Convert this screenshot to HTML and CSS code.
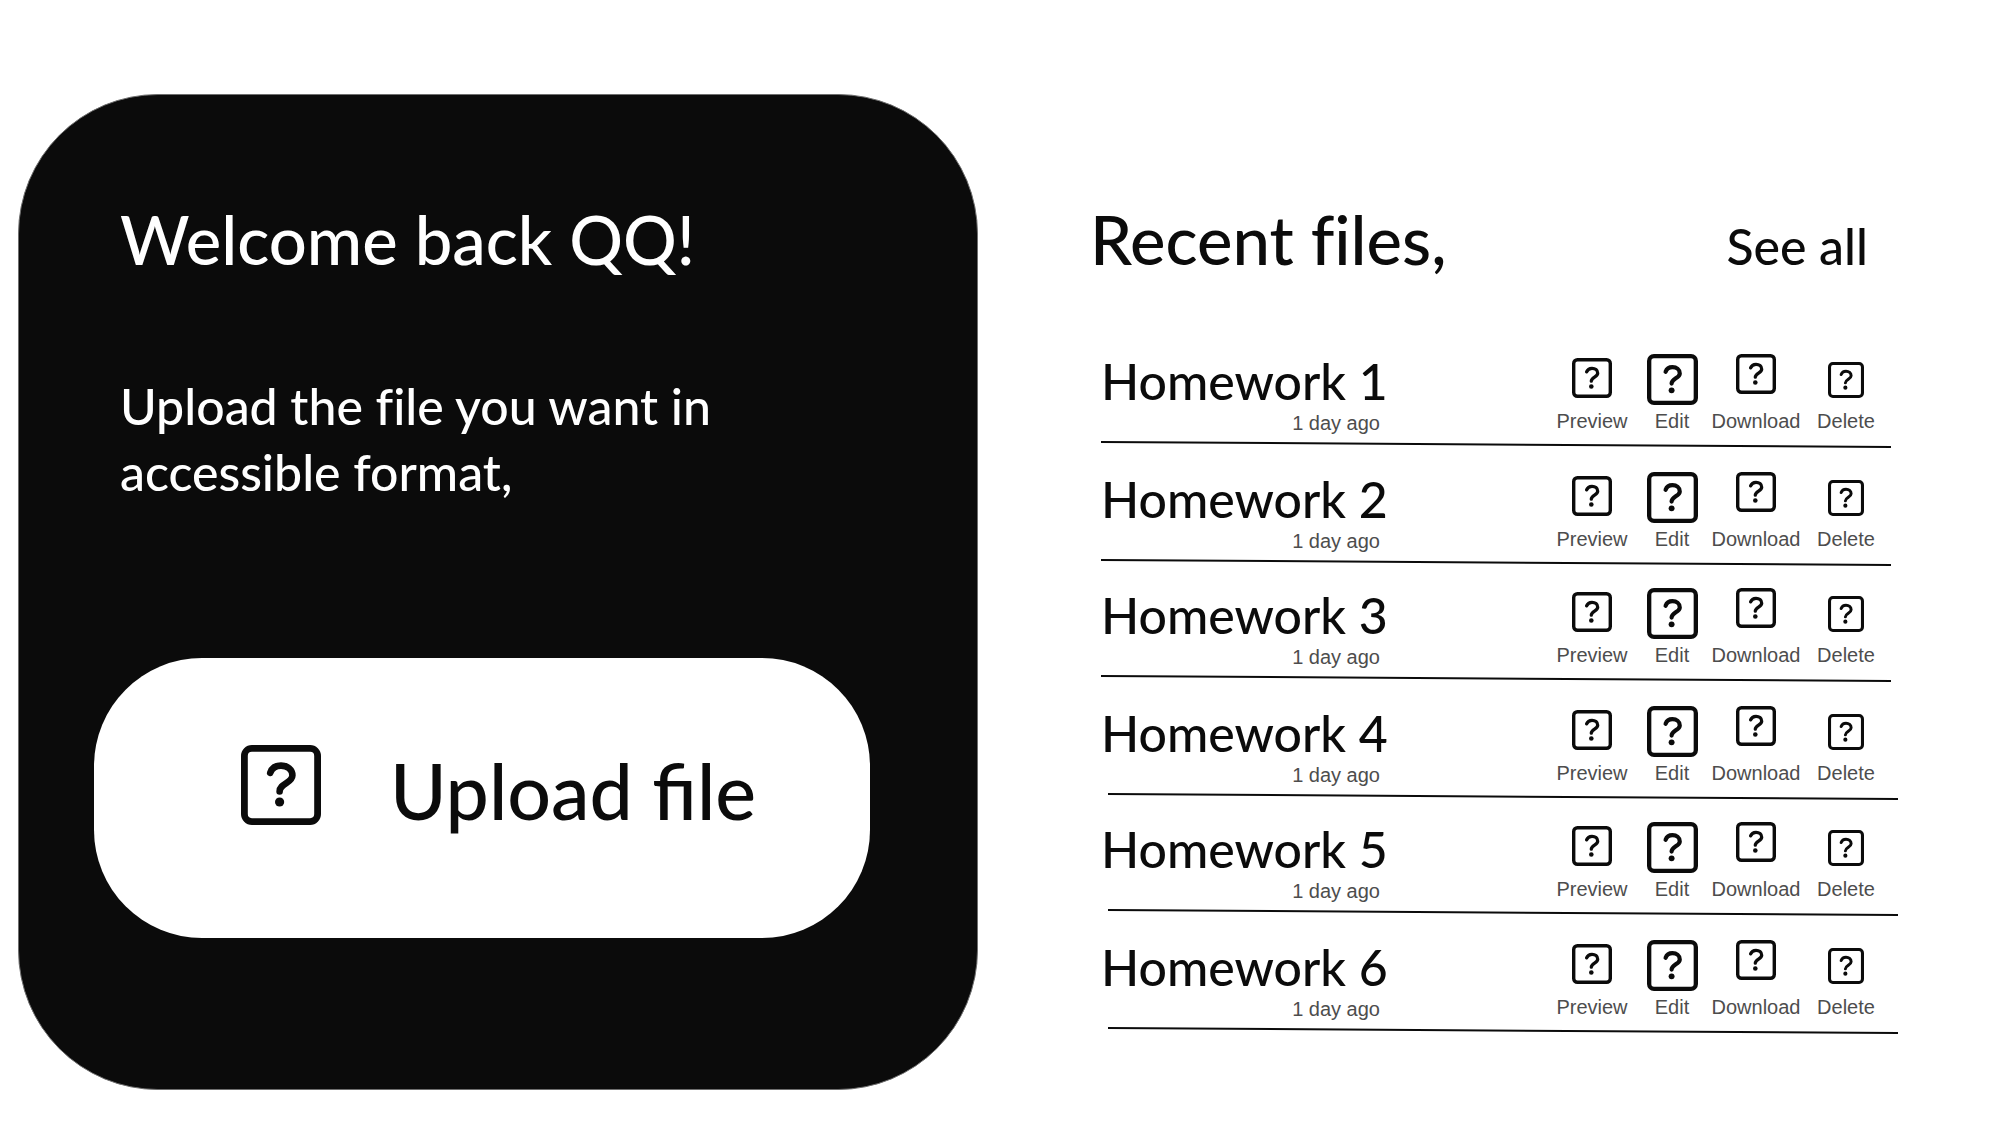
FILE: index.html
```
<!DOCTYPE html>
<html lang="en">
<head>
<meta charset="utf-8">
<meta name="viewport" content="width=device-width, initial-scale=1">
<title>Accessible files</title>
<link rel="stylesheet" href="styles.css">
</head>
<body>
<svg class="sprite" aria-hidden="true">
  <symbol id="unknown" viewBox="0 0 80 80">
    <rect x="3.4" y="3.4" width="73.2" height="73.2" rx="7.5" fill="none" stroke="currentColor" stroke-width="6.8"/>
    <path d="M29.2 27.8C31 22.8 35 20.6 40 20.6C46.3 20.6 51.4 24.4 51.4 30.4C51.4 37.8 38.6 38.6 38.6 46.4" fill="none" stroke="currentColor" stroke-width="6.6" stroke-linecap="round" stroke-linejoin="round"/>
    <circle cx="38.6" cy="57" r="4.6" fill="currentColor"/>
  </symbol>
  <symbol id="rule" viewBox="0 0 790 7" preserveAspectRatio="none">
    <path d="M0 1L790 6" fill="none" stroke="currentColor" stroke-width="2"/>
  </symbol>
</svg>
<main class="page">
  <section class="welcome">
    <h1 class="heading">Welcome back QQ!</h1>
    <p class="intro">Upload the file you want in accessible format,</p>
    <button class="upload" type="button"><svg class="upload-icon" aria-hidden="true"><use href="#unknown"/></svg><span>Upload file</span></button>
  </section>
  <section class="recent">
    <header class="recent-header">
      <h2 class="heading">Recent files,</h2>
      <a class="see-all" href="#all">See all</a>
    </header>
    <ul class="files" id="files"></ul>
  </section>
</main>
<script src="files.js"></script>
</body>
</html>
```
FILE: styles.css
```
* {
  box-sizing: border-box;
}

body {
  margin: 0;
  background: #fff;
  color: #0b0b0b;
  font-family: Lato, "Open Sans", sans-serif;
  font-weight: 500;
  font-variant-ligatures: none;
}

h1, h2, p, ul {
  margin: 0;
  padding: 0;
  font-weight: inherit;
}

button {
  margin: 0;
  padding: 0;
  border: 0;
  background: none;
  color: inherit;
  font-family: inherit;
  font-weight: inherit;
  cursor: pointer;
}

.sprite {
  display: none;
}

.page {
  display: grid;
  grid-template-columns: 960fr 808fr;
  column-gap: 112px;
  align-items: start;
  padding: 94px 114px 46px 18px;
}

.heading {
  font-size: 67px;
  line-height: 80px;
}

.welcome {
  padding: 104px 107px 151px 75px;
  border: 1px solid #6e6e6e;
  border-radius: 140px;
  background: #0b0b0b;
  color: #fff;
}

.welcome .heading,
.intro {
  padding-left: 26px;
}

.intro {
  max-width: 640px;
  margin-top: 94px;
  font-size: 50px;
  line-height: 66px;
}

.upload {
  display: flex;
  align-items: flex-start;
  gap: 66px;
  width: 100%;
  margin-top: 153px;
  padding: 84px 100px 100px 144px;
  border-radius: 108px;
  background: #fff;
  color: #0b0b0b;
  font-size: 77px;
  line-height: 96px;
  white-space: nowrap;
}

.upload-icon {
  flex: none;
  width: 86px;
  height: 86px;
  padding: 3px;
}

.recent {
  padding-top: 105px;
}

.recent-header {
  display: flex;
  align-items: baseline;
  justify-content: space-between;
  padding-right: 30px;
}

.see-all {
  color: inherit;
  font-size: 50px;
  line-height: 60px;
  text-decoration: none;
}

.files {
  margin-top: 73px;
  padding: 0 7px 0 11px;
  list-style: none;
}

.file {
  display: grid;
  grid-template-columns: auto auto;
  justify-content: space-between;
  padding-bottom: 22px;
}

.file:nth-child(even) {
  padding-bottom: 20px;
}

.name {
  font-size: 50px;
  line-height: 59px;
}

.date,
.action {
  color: #4d4d4d;
  font-family: "Liberation Sans", Arial, sans-serif;
  font-size: 20px;
  font-weight: 400;
  line-height: 24px;
}

.date {
  width: 279px;
  text-align: right;
}

.actions {
  display: grid;
  grid-template-columns: 82px 78px 90px 90px;
}

.action {
  display: grid;
  grid-template-rows: 57px 24px;
  justify-items: center;
}

.icon {
  width: 40px;
  height: 40px;
  margin-top: 2px;
  color: #0b0b0b;
}

.preview .icon {
  margin-top: 6px;
}

.edit .icon {
  width: 51px;
  height: 51px;
}

.delete .icon {
  width: 36px;
  height: 36px;
  margin-top: 10px;
}

.rule {
  grid-column: 1 / -1;
  width: 100%;
  height: 7px;
  margin-top: 6px;
}

.file:nth-child(n + 4) .rule {
  margin-left: 7px;
}
```
FILE: files.js
```
const actions = ["Preview", "Edit", "Download", "Delete"];
const files = [1, 2, 3, 4, 5, 6].map((n) => ({ name: `Homework ${n}`, date: "1 day ago" }));

document.getElementById("files").innerHTML = files
  .map(
    (file) => `<li class="file">
      <div>
        <div class="name">${file.name}</div>
        <div class="date">${file.date}</div>
      </div>
      <div class="actions">
        ${actions
          .map(
            (action) => `<button class="action ${action.toLowerCase()}" type="button">
              <svg class="icon" aria-hidden="true"><use href="#unknown"/></svg>
              <span>${action}</span>
            </button>`
          )
          .join("")}
      </div>
      <svg class="rule" aria-hidden="true"><use href="#rule"/></svg>
    </li>`
  )
  .join("");
```
